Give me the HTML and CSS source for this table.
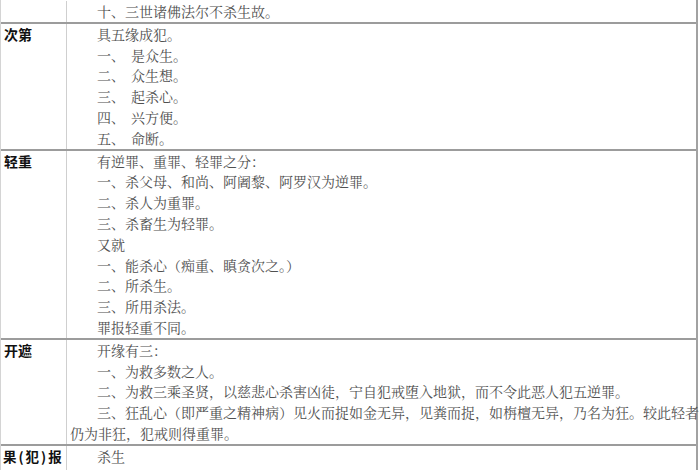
FILE: index.html
```html
<!DOCTYPE html>
<html lang="zh-CN">
<head>
<meta charset="utf-8">
<title>杀戒</title>
<link rel="stylesheet" href="styles.css">
</head>
<body>
<div class="sheet">
  <div class="row first">
    <div class="label"></div>
    <div class="cell">
      <p class="ln">十、三世诸佛法尔不杀生故。</p>
    </div>
  </div>
  <div class="row">
    <div class="label">次第</div>
    <div class="cell">
      <p class="ln">具五缘成犯。</p>
      <p class="ln"><span class="num">一、</span>是众生。</p>
      <p class="ln"><span class="num">二、</span>众生想。</p>
      <p class="ln"><span class="num">三、</span>起杀心。</p>
      <p class="ln"><span class="num">四、</span>兴方便。</p>
      <p class="ln"><span class="num">五、</span>命断。</p>
    </div>
  </div>
  <div class="row">
    <div class="label">轻重</div>
    <div class="cell">
      <p class="ln">有逆罪、重罪、轻罪之分：</p>
      <p class="ln">一、杀父母、和尚、阿阇黎、阿罗汉为逆罪。</p>
      <p class="ln">二、杀人为重罪。</p>
      <p class="ln">三、杀畜生为轻罪。</p>
      <p class="ln">又就</p>
      <p class="ln">一、能杀心（痴重、瞋贪次之。）</p>
      <p class="ln">二、所杀生。</p>
      <p class="ln">三、所用杀法。</p>
      <p class="ln">罪报轻重不同。</p>
    </div>
  </div>
  <div class="row">
    <div class="label">开遮</div>
    <div class="cell">
      <p class="ln">开缘有三：</p>
      <p class="ln">一、为救多数之人。</p>
      <p class="ln">二、为救三乘圣贤，以慈悲心杀害凶徒，宁自犯戒堕入地狱，而不令此恶人犯五逆罪。</p>
      <p class="ln">三、狂乱心（即严重之精神病）见火而捉如金无异，见粪而捉，如栴檀无异，乃名为狂。较此轻者<br>仍为非狂，犯戒则得重罪。</p>
    </div>
  </div>
  <div class="row last">
    <div class="label tight">果<span class="paren">(</span>犯<span class="paren">)</span>报</div>
    <div class="cell">
      <p class="ln">杀生</p>
    </div>
  </div>
</div>
</body>
</html>
```

FILE: styles.css
```css
html, body {
  margin: 0;
  padding: 0;
  background: #ffffff;
}

body {
  width: 700px;
  height: 470px;
  overflow: hidden;
}

.sheet {
  width: 698px;
  padding-top: 1px;
  border-left: 1px solid #d4d4d4;
  border-right: 2px solid #a2a2a2;
  box-sizing: border-box;
}

.row {
  display: grid;
  grid-template-columns: 66px 1fr;
  border-top: 2px solid #9c9c9c;
}

.row.first {
  border-top: none;
}

.row.last {
  min-height: 40px;
}

.label {
  border-right: 1px solid #cfcfcf;
  padding-left: 3px;
  font-family: "Noto Sans CJK SC", "Noto Sans", sans-serif;
  font-weight: 700;
  font-size: 14px;
  line-height: 20.8px;
  color: #111111;
  white-space: nowrap;
}

.label.tight {
  padding-left: 2px;
  font-size: 13.5px;
}

.paren {
  margin: 0 2px;
}

.cell {
  padding-left: 3px;
  min-width: 0;
}

.ln {
  margin: 0;
  text-indent: 27px;
  font-family: "Noto Serif CJK SC", "Noto Sans CJK SC", "Liberation Serif", serif;
  font-size: 14px;
  line-height: 20.8px;
  color: #505050;
  white-space: nowrap;
}

.num {
  margin-right: 6px;
}
```
